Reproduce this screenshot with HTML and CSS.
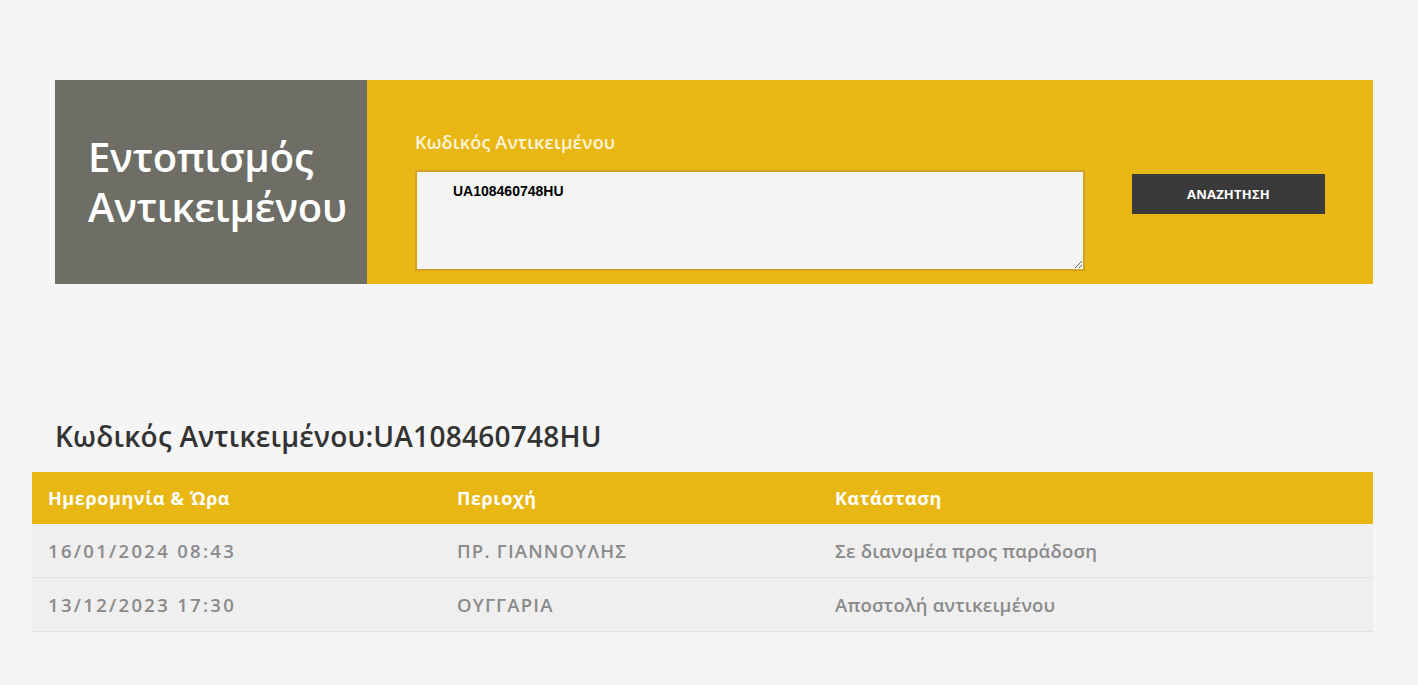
FILE: index.html
```html
<!DOCTYPE html>
<html lang="el">
<head>
<meta charset="utf-8">
<title>Εντοπισμός Αντικειμένου</title>
<link rel="stylesheet" href="styles.css">
</head>
<body>
<div class="page">
  <section class="banner">
    <div class="banner-title">
      <h1>Εντοπισμός<br>Αντικειμένου</h1>
    </div>
    <form class="banner-form">
      <div class="field">
        <label class="field-label" for="code">Κωδικός Αντικειμένου</label>
        <textarea id="code" class="code-input">UA108460748HU</textarea>
      </div>
      <button type="button" class="search-btn">ΑΝΑΖΗΤΗΣΗ</button>
    </form>
  </section>

  <h2 class="result-title">Κωδικός Αντικειμένου:UA108460748HU</h2>

  <div class="table">
    <div class="row head">
      <div class="cell">Ημερομηνία &amp; Ώρα</div>
      <div class="cell">Περιοχή</div>
      <div class="cell">Κατάσταση</div>
    </div>
    <div class="row">
      <div class="cell date">16/01/2024 08:43</div>
      <div class="cell caps">ΠΡ. ΓΙΑΝΝΟΥΛΗΣ</div>
      <div class="cell">Σε διανομέα προς παράδοση</div>
    </div>
    <div class="row">
      <div class="cell date">13/12/2023 17:30</div>
      <div class="cell caps">ΟΥΓΓΑΡΙΑ</div>
      <div class="cell">Αποστολή αντικειμένου</div>
    </div>
  </div>
</div>
</body>
</html>
```
FILE: styles.css
```css
* { box-sizing: border-box; }
html, body {
  margin: 0;
  padding: 0;
  background: #f5f5f5;
  font-family: "Open Sans", "Noto Sans", sans-serif;
}
.page {
  padding: 80px 45px 0 32px;
}
.banner {
  display: flex;
  height: 204px;
  margin-left: 23px;
  background: #e9b714;
}
.banner-title {
  width: 312px;
  flex: none;
  background: #6e6e66;
  padding: 52px 0 0 33px;
}
.banner-title h1 {
  margin: 0;
  color: #fff;
  font-size: 40px;
  line-height: 50px;
  font-weight: 600;
  letter-spacing: -0.2px;
}
.banner-form {
  flex: 1;
  display: flex;
  padding: 0 48px 0 48px;
  gap: 47px;
  align-items: flex-start;
}
.field {
  display: flex;
  flex-direction: column;
  width: 670px;
  padding-top: 51px;
}
.field-label {
  color: #fcf5dc;
  font-size: 18px;
  font-weight: 600;
  line-height: 22px;
  margin-bottom: 17px;
  letter-spacing: 0.2px;
}
.code-input {
  width: 670px;
  height: 101px;
  border: 2px solid #d5a21f;
  background: #f4f4f4;
  padding: 11px 36px;
  font-family: "Liberation Sans", Arial, sans-serif;
  font-weight: bold;
  font-size: 14px;
  color: #000;
  resize: both;
  outline: none;
}
.search-btn {
  margin-top: 94px;
  width: 193px;
  height: 40px;
  background: #3a3a3a;
  border: none;
  color: #fff;
  font-family: "Open Sans", sans-serif;
  font-weight: 700;
  font-size: 13px;
  letter-spacing: 0.2px;
}
.result-title {
  margin: 136px 0 0 23px;
  font-size: 28px;
  font-weight: 600;
  color: #333;
  line-height: 32px;
  height: 52px;
  letter-spacing: 0.25px;
}
.table {
  width: 1341px;
}
.row {
  display: grid;
  grid-template-columns: 409px 378px 1fr;
  height: 54px;
  align-items: center;
  background: #efefef;
  border-bottom: 1px solid #e2e2e2;
}
.row.head {
  height: 52px;
  background: #e9b714;
  border-bottom: none;
}
.cell {
  padding-left: 16px;
  font-size: 18.5px;
  font-weight: 600;
  color: #8a8a8a;
  letter-spacing: 0.2px;
}
.cell.date {
  letter-spacing: 2.3px;
}
.cell.caps {
  letter-spacing: 1.2px;
}
.row.head .cell {
  color: #fff;
  font-weight: 700;
  font-size: 18px;
  letter-spacing: 0.6px;
}
```
